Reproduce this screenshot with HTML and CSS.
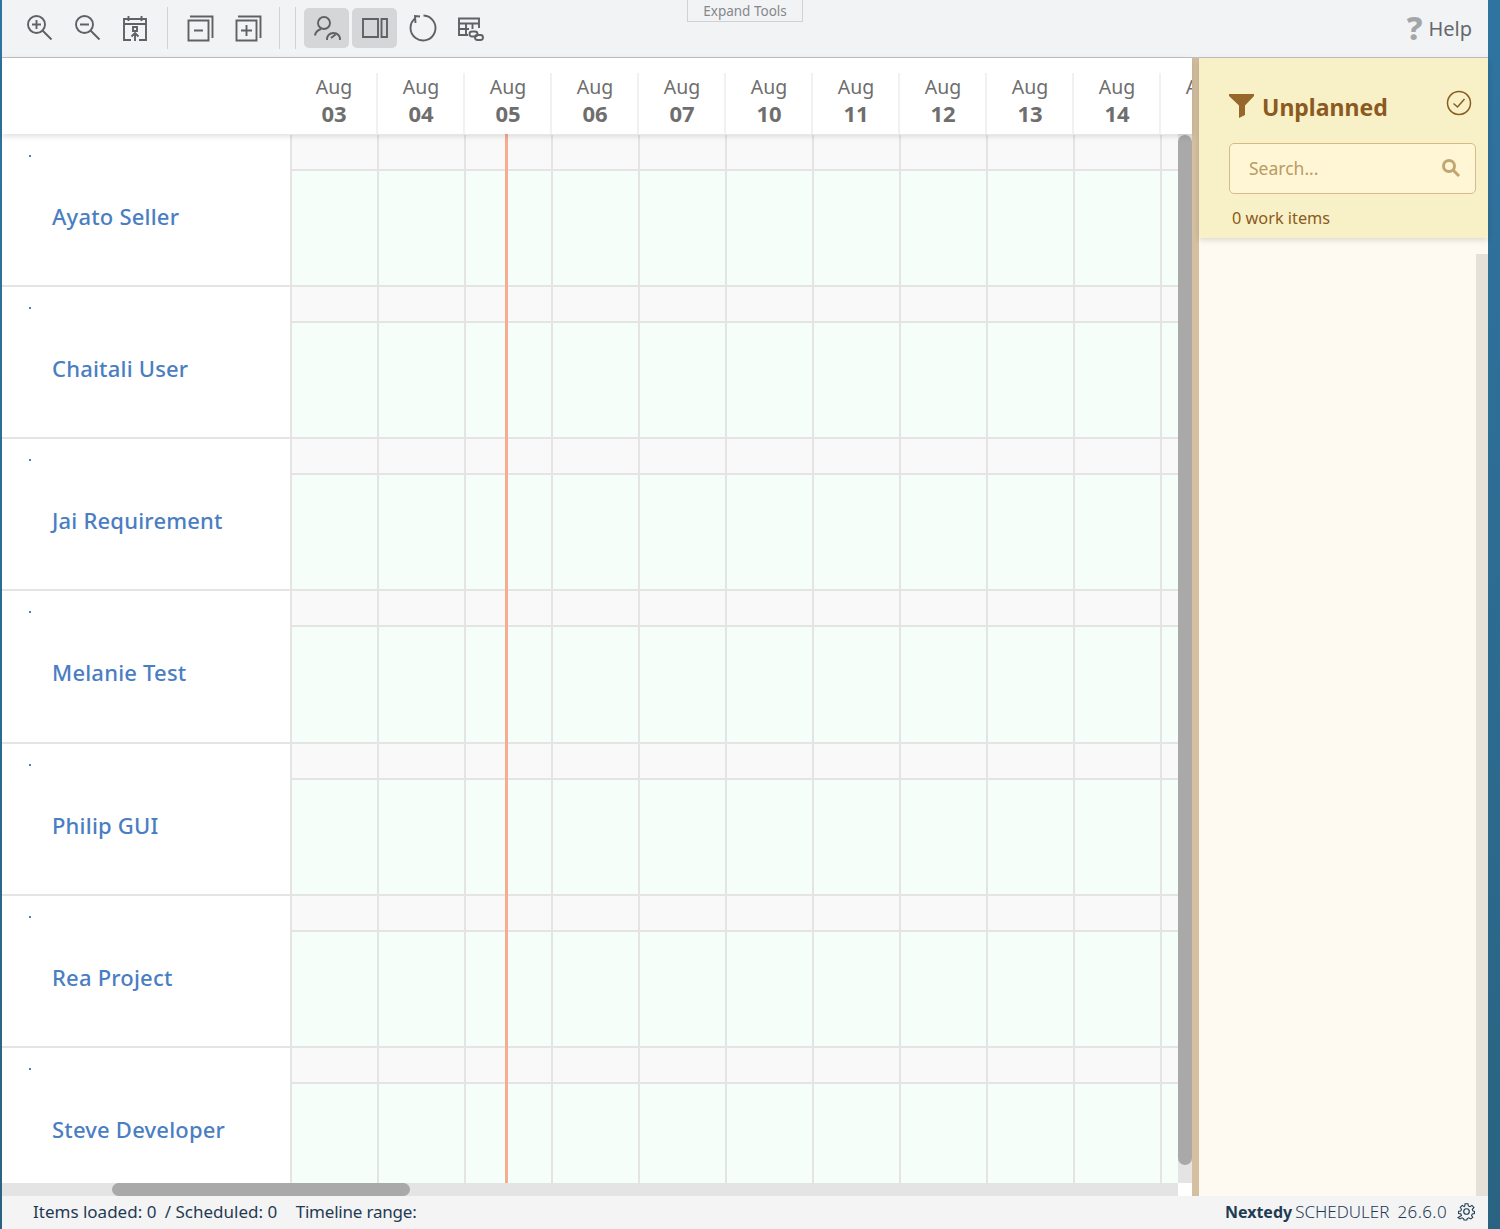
FILE: index.html
```html
<!DOCTYPE html>
<html>
  <head>
    <title>Nextedy Scheduler</title>
    <meta name="viewport" content="width=device-width, initial-scale=1" />
    <link rel="stylesheet" href="styles.css">
  </head>
  <body>
    <div id="app">
      <!-- toolbar -->
      <div class="toolbar">
        <button class="tool">
          <svg viewBox="0 0 30 30"><circle cx="12.500" cy="11.500" r="8.500"/><path d="M18.500 17.500l9 9M8 11.500h9M12.500 7v9"/></svg>
        </button>
        <button class="tool">
          <svg viewBox="0 0 30 30"><circle cx="12.500" cy="11.500" r="8.500"/><path d="M18.500 17.500l9 9M8 11.500h9"/></svg>
        </button>
        <button class="tool">
          <svg viewBox="0 0 30 30"><path d="M11 27H4V6h22v21h-7M4 11h22M8.500 3v5M21.500 3v5M13 14h4v4h-4zM15 28v-8M11.500 23.500L15 20l3.500 3.500"/></svg>
        </button>
        <span class="sep"></span>
        <button class="tool">
          <svg viewBox="0 0 30 30"><path d="M3.500 7.500h20v20h-20zM5 3.500h22.500V25M9 17.500h9"/></svg>
        </button>
        <button class="tool">
          <svg viewBox="0 0 30 30"><path d="M3.500 7.500h20v20h-20zM5 3.500h22.500V25M8 17.500h11M13.500 12v11"/></svg>
        </button>
        <span class="sep sep-narrow"></span>
        <span class="sep sep-last"></span>
        <button class="tool active">
          <svg viewBox="0 0 30 30"><circle cx="12" cy="10" r="6"/><path d="M3 22.500c.5-3.500 3-5.500 6-6.500M15 27c-.5-4 2.500-7 6.500-7s7 3 6.500 7M19 25l4.500-3.500"/></svg>
        </button>
        <button class="tool active">
          <svg viewBox="0 0 30 30"><path d="M3 6h15v18H3zM21.500 6H27v18h-5.500z"/></svg>
        </button>
        <button class="tool">
          <svg viewBox="0 0 30 30"><path d="M15.500 2.500A12.500 12.500 0 1 1 7.500 5M12 3.500L7 3l.5 7"/></svg>
        </button>
        <button class="tool">
          <svg viewBox="0 0 30 30"><path d="M12 22H3V5.500h20V15M3 10.500h20M3 16h10M10 10.500V22M16.500 10.500V16"/><rect x="13.500" y="18.500" width="8" height="5" rx="2.500"/><rect x="19" y="22" width="8" height="5" rx="2.500"/></svg>
        </button>
        <div class="help">
          <span class="help-mark">?</span>
          <span class="help-text">Help</span>
        </div>
        <div class="expand-tab">Expand Tools</div>
      </div>

      <div class="main">
        <!-- scheduler part -->
        <div class="scheduler">
          <div class="head">
            <div class="head-left"></div>
            <div class="day"><span>Aug</span><b>03</b></div>
            <div class="day"><span>Aug</span><b>04</b></div>
            <div class="day"><span>Aug</span><b>05</b></div>
            <div class="day"><span>Aug</span><b>06</b></div>
            <div class="day"><span>Aug</span><b>07</b></div>
            <div class="day"><span>Aug</span><b>10</b></div>
            <div class="day"><span>Aug</span><b>11</b></div>
            <div class="day"><span>Aug</span><b>12</b></div>
            <div class="day"><span>Aug</span><b>13</b></div>
            <div class="day"><span>Aug</span><b>14</b></div>
            <div class="day"><span>Aug</span><b>17</b></div>
          </div>
          <div class="body">
            <div class="rows">
              <div class="row">
                <div class="label"><i class="dot"></i><a class="name">Ayato Seller</a></div>
                <div class="lane"><div class="band-top"></div><div class="band-main"></div></div>
              </div>
              <div class="row">
                <div class="label"><i class="dot"></i><a class="name">Chaitali User</a></div>
                <div class="lane"><div class="band-top"></div><div class="band-main"></div></div>
              </div>
              <div class="row">
                <div class="label"><i class="dot"></i><a class="name">Jai Requirement</a></div>
                <div class="lane"><div class="band-top"></div><div class="band-main"></div></div>
              </div>
              <div class="row">
                <div class="label"><i class="dot"></i><a class="name">Melanie Test</a></div>
                <div class="lane"><div class="band-top"></div><div class="band-main"></div></div>
              </div>
              <div class="row">
                <div class="label"><i class="dot"></i><a class="name">Philip GUI</a></div>
                <div class="lane"><div class="band-top"></div><div class="band-main"></div></div>
              </div>
              <div class="row">
                <div class="label"><i class="dot"></i><a class="name">Rea Project</a></div>
                <div class="lane"><div class="band-top"></div><div class="band-main"></div></div>
              </div>
              <div class="row">
                <div class="label"><i class="dot"></i><a class="name">Steve Developer</a></div>
                <div class="lane"><div class="band-top"></div><div class="band-main"></div></div>
              </div>
              <div class="today"></div>
            </div>
            <div class="vscroll"><div class="vthumb"></div></div>
          </div>
          <div class="hscroll-row">
            <div class="hscroll"><div class="hthumb"></div></div>
            <div class="corner"></div>
          </div>
        </div>

        <div class="splitter"></div>

        <!-- unplanned panel -->
        <div class="panel">
          <div class="panel-head">
            <div class="panel-title">
              <svg class="funnel" viewBox="0 0 25 24"><path d="M0 0h25v2L16 11.500V21l-6 3V11.500L0 2z"/></svg>
              <span class="panel-name">Unplanned</span>
              <svg class="check" viewBox="0 0 26 26"><circle cx="13" cy="13" r="11.500"/><path d="M7.500 13.500l4 3.500 7-8"/></svg>
            </div>
            <div class="search">
              <span>Search...</span>
              <svg viewBox="0 0 20 20"><circle cx="8" cy="8" r="5.500"/><path d="M12 12l6 6"/></svg>
            </div>
            <div class="count">0 work items</div>
          </div>
          <div class="panel-body">
            <div class="panel-scroll"></div>
          </div>
        </div>
      </div>

      <!-- footer -->
      <div class="footer">
        <div class="stats">
          <span>Items loaded: 0</span>
          <span>/ Scheduled: 0</span>
          <span class="range">Timeline range:</span>
        </div>
        <div class="brand">
          <b>Nextedy</b>
          <span class="product">SCHEDULER</span>
          <span class="version">26.6.0</span>
          <svg viewBox="0 0 24 24"><circle cx="12" cy="12" r="3.500"/><path d="M10 2h4l.6 3 2.300 1 2.600-1.700 2.800 2.800L20 9.700l1 2.300 2 .5v3l-3 .6-1 2.300 1.700 2.600-2.800 2-2.600-1.500-2.300 1-.5 2h-4l-.6-2-2.300-1-2.600 1.500-2.800-2L5 18.400 4 16l-3-.5v-3l3-.5 1-2.300L3.300 7.100l2.800-2.800L8.700 6l.9-1z" transform="translate(1.100 0.400) scale(.91)"/></svg>
        </div>
      </div>
    </div>
  </body>
</html>
```

FILE: styles.css
```css
* {
  margin: 0;
  padding: 0;
  box-sizing: border-box;
}

body {
  width: 100%;
  height: 1229px;
  overflow: hidden;
  background: linear-gradient(#2f74a1, #2a6382);
  font-family: "Noto Sans", Arial, sans-serif;
}

#app {
  display: flex;
  flex-direction: column;
  height: 1229px;
  margin-left: 2px;
  margin-right: 12px;
  background: #fff;
}

/* toolbar */
.toolbar {
  position: relative;
  display: flex;
  align-items: center;
  gap: 3px;
  height: 58px;
  padding: 0 0 2px 14px;
  background: #f2f3f5;
  border-bottom: 1px solid #bfc2c4;
}

.tool {
  display: flex;
  align-items: center;
  justify-content: center;
  width: 45px;
  height: 40px;
  border: 0;
  border-radius: 5px;
  background: none;
}

.tool svg {
  width: 30px;
  height: 30px;
  fill: none;
  stroke: #5f6264;
  stroke-width: 1.900;
}

.tool.active {
  background: #d5d6d7;
}

.sep {
  width: 1px;
  height: 42px;
  margin: 0 6.500px;
  background: #d0d2d3;
}

.sep-narrow {
  margin: 0 5.500px;
}

.sep-last {
  margin: 0 5.500px 0 6.500px;
}

.help {
  display: flex;
  align-items: center;
  gap: 6px;
  margin-left: auto;
  padding-right: 16px;
  font-size: 20px;
  color: #65686b;
}

.help-mark {
  font-size: 32px;
  line-height: 32px;
  font-weight: 800;
  color: #a3a5a7;
}

.help-text {
  margin-top: 2px;
}

.expand-tab {
  position: absolute;
  top: 0;
  left: 685px;
  width: 116px;
  height: 22px;
  border: 1px solid #d0d2d4;
  border-top: 0;
  font-size: 13.500px;
  line-height: 22px;
  text-align: center;
  color: #85888b;
}

/* main area */
.main {
  flex: 1;
  display: flex;
  min-height: 0;
}

.scheduler {
  display: flex;
  flex-direction: column;
  width: 1190px;
  min-width: 0;
}

.head {
  position: relative;
  z-index: 2;
  display: flex;
  flex: none;
  height: 76px;
  padding-top: 15px;
  overflow: hidden;
  background: #fff;
  box-shadow: 0 2px 6px rgba(0, 0, 0, 0.14);
}

.head-left {
  flex: none;
  width: 289px;
}

.day {
  flex: none;
  display: flex;
  flex-direction: column;
  align-items: center;
  width: 87px;
  padding-left: 1px;
  border-right: 2px solid #f1f1f1;
  color: #6e6e6e;
  font-size: 19.500px;
  line-height: 27px;
}

.day b {
  font-size: 22px;
}

.body {
  flex: 1;
  display: flex;
  min-height: 0;
}

.rows {
  position: relative;
  flex: 1;
  padding-top: 1px;
  overflow: hidden;
}

.row {
  display: flex;
  height: 152.150px;
  border-bottom: 2px solid #e4e4e4;
}

.label {
  flex: none;
  width: 290px;
  border-right: 2px solid #e4e4e4;
}

.dot {
  display: block;
  width: 2px;
  height: 2px;
  margin: 20px 0 0 27px;
  background: #4a7fc4;
}

.name {
  display: block;
  margin: 44px 0 0 50px;
  font-size: 22px;
  font-weight: 500;
  letter-spacing: 0.200px;
  line-height: 30px;
  color: #4a7ec2;
}

.lane {
  flex: 1;
  display: flex;
  flex-direction: column;
}

/* day lines are painted, there are no cells in the lanes */
.band-top,
.band-main {
  background-image: repeating-linear-gradient(to right, transparent 0 85px, #e4e4e4 85px 87px);
}

.band-top {
  height: 36px;
  border-bottom: 2px solid #e4e4e4;
  background-color: #f9f9f9;
}

.band-main {
  flex: 1;
  background-color: #f5fef9;
}

.today {
  position: absolute;
  top: 0;
  bottom: 0;
  left: 502.500px;
  width: 3px;
  background: #f7ab90;
}

.vscroll {
  flex: none;
  width: 14px;
  background: #e4e4e4;
}

.vthumb {
  height: 1030px;
  margin-top: 1px;
  border-radius: 7px;
  background: #a9a9a9;
}

.hscroll-row {
  display: flex;
  flex: none;
  height: 13px;
}

.hscroll {
  flex: 1;
  background: #e4e4e4;
}

.hthumb {
  width: 298px;
  height: 13px;
  margin-left: 110px;
  border-radius: 7px;
  background: #a9a9a9;
}

.corner {
  flex: none;
  width: 14px;
  background: #fff;
}

.splitter {
  flex: none;
  width: 7px;
  background: #d6bfa0;
}

/* unplanned panel */
.panel {
  flex: 1;
  display: flex;
  flex-direction: column;
  min-width: 0;
  background: #fefaf1;
}

.panel-head {
  position: relative;
  flex: none;
  height: 180px;
  padding: 30px 12px 0 30px;
  background: #f8f1c8;
  box-shadow: 0 2px 6px rgba(0, 0, 0, 0.14);
}

.panel-title {
  display: flex;
  align-items: center;
  height: 36px;
  font-size: 23px;
  font-weight: 700;
  color: #8b5a20;
}

.panel-name {
  margin-top: 2px;
}

.funnel {
  width: 25px;
  height: 24px;
  margin-right: 8px;
  fill: #96662a;
}

.check {
  width: 26px;
  height: 26px;
  margin-left: auto;
  margin-right: 4px;
  margin-top: -7px;
  fill: none;
  stroke: #8b5a20;
  stroke-width: 1.500;
}

.search {
  display: flex;
  align-items: center;
  justify-content: space-between;
  height: 51px;
  margin-top: 19px;
  padding: 0 14px 2px 19px;
  background: #fff6d6;
  border: 1px solid #d9b988;
  border-radius: 5px;
  font-size: 17.500px;
  color: #b99b63;
}

.search svg {
  width: 20px;
  height: 20px;
  fill: none;
  stroke: #c2a672;
  stroke-width: 3;
}

.count {
  margin: 12px 0 0 3px;
  font-size: 16.300px;
  line-height: 24px;
  color: #8b5a20;
}

.panel-body {
  flex: 1;
  display: flex;
  justify-content: flex-end;
  padding-top: 16px;
}

.panel-scroll {
  width: 12px;
  background: #e5e1d8;
}

/* footer */
.footer {
  display: flex;
  flex: none;
  align-items: center;
  justify-content: space-between;
  height: 33px;
  padding: 0 12px 2px 31px;
  background: #f4f4f5;
  font-size: 17px;
  color: #1f3b53;
}

.stats span {
  margin-right: 4px;
}

.stats .range {
  margin-left: 10px;
  letter-spacing: -0.200px;
}

.brand {
  display: flex;
  align-items: center;
  gap: 3px;
}

.brand b {
  font-size: 16px;
}

.product {
  font-weight: 300;
}

.version {
  margin-left: 5px;
  font-weight: 300;
  letter-spacing: 0.400px;
}

.brand svg {
  width: 19px;
  height: 19px;
  margin-left: 7px;
  fill: none;
  stroke: #1f3b53;
  stroke-width: 1.500;
}
```
